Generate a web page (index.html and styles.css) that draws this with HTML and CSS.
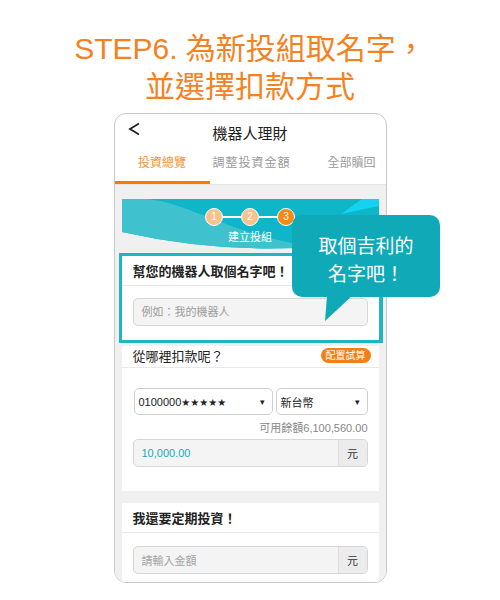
FILE: index.html
```html
<!DOCTYPE html>
<html lang="zh-Hant">
<head>
    <meta charset="UTF-8">
    <meta name="viewport" content="width=device-width, initial-scale=1.0">
    <title>STEP6</title>
    <link rel="stylesheet" href="styles.css">
</head>
<body>
    <h1 class="step-title">STEP6. 為新投組取名字，<br>並選擇扣款方式</h1>

    <div class="phone">
        <div class="topbar">
            <span class="back">
                <svg width="13" height="14" viewBox="0 0 13 14"><path d="M11 1.5 L2 7 L11 12.5" fill="none" stroke="#222" stroke-width="1.8"/></svg>
            </span>
            <span class="topbar-title">機器人理財</span>
        </div>

        <div class="tabs">
            <div class="tab active">投資總覽</div>
            <div class="tab wide">調整投資金額</div>
            <div class="tab last">全部贖回</div>
        </div>

        <div class="content">
            <div class="banner">
                <svg class="banner-bg" width="257" height="52" viewBox="0 0 257 52">
                    <path d="M0 0 H257 V40 Q130 62 0 33 Z" fill="#0fb5c9"/>
                    <path d="M0 0 H25 C65 4 100 30 170 44 L257 38 V40 Q130 62 0 33 Z" fill="#3fc2cd"/>
                    <path d="M240 0 H257 V7 L219 15 Z" fill="#14d2f2"/>
                </svg>
                <div class="steps">
                    <span class="dot">1</span><span class="line"></span>
                    <span class="dot">2</span><span class="line"></span>
                    <span class="dot current">3</span>
                </div>
                <div class="banner-label">建立投組</div>
            </div>

            <div class="card highlight">
                <div class="card-head bold">幫您的機器人取個名字吧！</div>
                <div class="card-body name-body">
                    <div class="field">例如：我的機器人</div>
                </div>
            </div>

            <div class="card">
                <div class="card-head short">
                    <span>從哪裡扣款呢？</span>
                    <span class="pill">配置試算</span>
                </div>
                <div class="card-body pay-body">
                    <div class="select-row">
                        <div class="select account"><span>0100000<span class="stars">★★★★★</span></span><span class="caret">▾</span></div>
                        <div class="select currency">新台幣<span class="caret">▾</span></div>
                    </div>
                    <div class="balance">可用餘額6,100,560.00</div>
                    <div class="input-group">
                        <span class="amount">10,000.00</span>
                        <span class="addon">元</span>
                    </div>
                </div>
            </div>

            <div class="card last-card">
                <div class="card-head bold">我還要定期投資！</div>
                <div class="card-body regular-body">
                    <div class="input-group">
                        <span class="placeholder">請輸入金額</span>
                        <span class="addon">元</span>
                    </div>
                </div>
            </div>
        </div>
    </div>

    <div class="bubble">取個吉利的<br>名字吧！</div>
</body>
</html>
```

FILE: styles.css
```css
body {
    margin: 0;
    padding: 0;
    background: #fff;
    font-family: "Liberation Sans", "Noto Sans CJK TC", sans-serif;
    color: #333;
}
.step-title {
    margin: 0;
    padding-top: 30px;
    font-size: 30px;
    line-height: 38px;
    font-weight: normal;
    text-align: center;
    color: #f5821f;
}
.phone {
    width: 271px;
    margin: 7px auto 0;
    border: 1px solid #c9c9c9;
    border-radius: 12px;
    overflow: hidden;
    background: #fff;
}
.topbar {
    height: 34px;
    display: flex;
    align-items: center;
    justify-content: center;
    position: relative;
}
.back {
    position: absolute;
    left: 13px;
    top: 8px;
}
.topbar-title {
    font-size: 15px;
    color: #222;
    padding-top: 3px;
}
.tabs {
    display: flex;
    height: 36px;
    overflow: hidden;
    border-bottom: 1px solid #e6e6e6;
}
.tab {
    flex-shrink: 0;
    width: 95px;
    box-sizing: border-box;
    line-height: 30px;
    text-align: center;
    font-size: 12px;
    color: #9a9a9a;
    border-bottom: 3px solid transparent;
}
.tab.wide {
    width: 84px;
    letter-spacing: 1px;
}
.tab.last {
    width: 116px;
}
.tab.active {
    color: #f39332;
    border-bottom-color: #f57c00;
}
.content {
    background: #f0f0f0;
    padding: 14px 7px 0;
}
.banner {
    position: relative;
    height: 51px;
    padding-top: 9px;
    box-sizing: border-box;
}
.banner-bg {
    position: absolute;
    left: 0;
    top: 0;
}
.steps {
    position: relative;
    display: flex;
    align-items: center;
    justify-content: center;
}
.dot {
    width: 16px;
    height: 16px;
    border-radius: 50%;
    background: #f8c28c;
    border: 1px solid #fff;
    color: #fff;
    font-size: 10px;
    line-height: 16px;
    text-align: center;
}
.dot.current {
    background: #f28a17;
}
.line {
    width: 18px;
    height: 2px;
    background: #fff;
}
.banner-label {
    position: relative;
    text-align: center;
    font-size: 11px;
    color: #fff;
    margin-top: 2px;
}
.card {
    background: #fff;
    margin-top: 6px;
}
.highlight {
    position: relative;
    z-index: 1;
    box-shadow: -3px 0 0 0 #20b5c4, 4px 0 0 0 #20b5c4, 0 -3px 0 0 #20b5c4, 0 3px 0 0 #20b5c4, -3px -3px 0 0 #20b5c4, 4px -3px 0 0 #20b5c4, -3px 3px 0 0 #20b5c4, 4px 3px 0 0 #20b5c4;
}
.card-head {
    height: 30px;
    box-sizing: border-box;
    border-bottom: 1px solid #e8e8e8;
    padding: 0 11px;
    display: flex;
    align-items: center;
    justify-content: space-between;
    font-size: 13px;
    color: #222;
}
.card-head.bold {
    font-weight: bold;
}
.card-head.short {
    height: 22px;
    padding-bottom: 2px;
}
.pill {
    background: #f57f17;
    color: #fff;
    font-size: 10px;
    line-height: 15px;
    padding: 0 5px;
    border-radius: 8px;
    margin-right: -3px;
}
.card-body {
    padding: 0 11px;
}
.name-body {
    padding-top: 12px;
    padding-bottom: 14px;
}
.field {
    height: 28px;
    box-sizing: border-box;
    border: 1px solid #d6d6d6;
    border-radius: 5px;
    background: #f4f4f4;
    padding-left: 8px;
    line-height: 26px;
    font-size: 11px;
    color: #9c9c9c;
}
.pay-body {
    padding-top: 20px;
    padding-bottom: 24px;
}
.select-row {
    display: flex;
    gap: 3px;
    padding-left: 1px;
}
.select {
    height: 27px;
    box-sizing: border-box;
    border: 1px solid #cfcfcf;
    border-radius: 5px;
    display: flex;
    align-items: center;
    justify-content: space-between;
    padding: 0 7px 0 4px;
    font-size: 11px;
    color: #222;
}
.stars {
    font-family: "DejaVu Sans", sans-serif;
    font-size: 10px;
}
.account {
    width: 139px;
}
.currency {
    width: 92px;
}
.caret {
    font-size: 9px;
    color: #222;
}
.balance {
    text-align: right;
    font-size: 11px;
    color: #888;
    margin-top: 6px;
    line-height: 14px;
}
.input-group {
    height: 28px;
    box-sizing: border-box;
    border: 1px solid #d6d6d6;
    border-radius: 5px;
    background: #f4f4f4;
    display: flex;
    align-items: center;
    margin-top: 4px;
    overflow: hidden;
}
.amount {
    flex: 1;
    padding-left: 8px;
    font-size: 11px;
    color: #1aa9bd;
}
.placeholder {
    flex: 1;
    padding-left: 8px;
    font-size: 11px;
    color: #a3a3a3;
}
.addon {
    width: 28px;
    height: 100%;
    border-left: 1px solid #dedede;
    background: #ececec;
    display: flex;
    align-items: center;
    justify-content: center;
    font-size: 11px;
    color: #333;
}
.last-card {
    margin-top: 12px;
}
.regular-body {
    padding-top: 13px;
    padding-bottom: 8px;
}
.regular-body .input-group {
    margin-top: 0;
}
.bubble {
    position: absolute;
    left: 292px;
    top: 215px;
    width: 148px;
    height: 82px;
    box-sizing: border-box;
    padding-top: 16px;
    border-radius: 10px;
    background: #10a9b8;
    color: #fff;
    font-family: "Noto Sans CJK TC", sans-serif;
    font-size: 19px;
    line-height: 28px;
    text-align: center;
    z-index: 2;
}
.bubble::after {
    content: "";
    position: absolute;
    left: 33px;
    top: 81px;
    width: 27px;
    height: 25px;
    background: #10a9b8;
    clip-path: polygon(2px 0, 27px 0, 0 25px);
}
```
